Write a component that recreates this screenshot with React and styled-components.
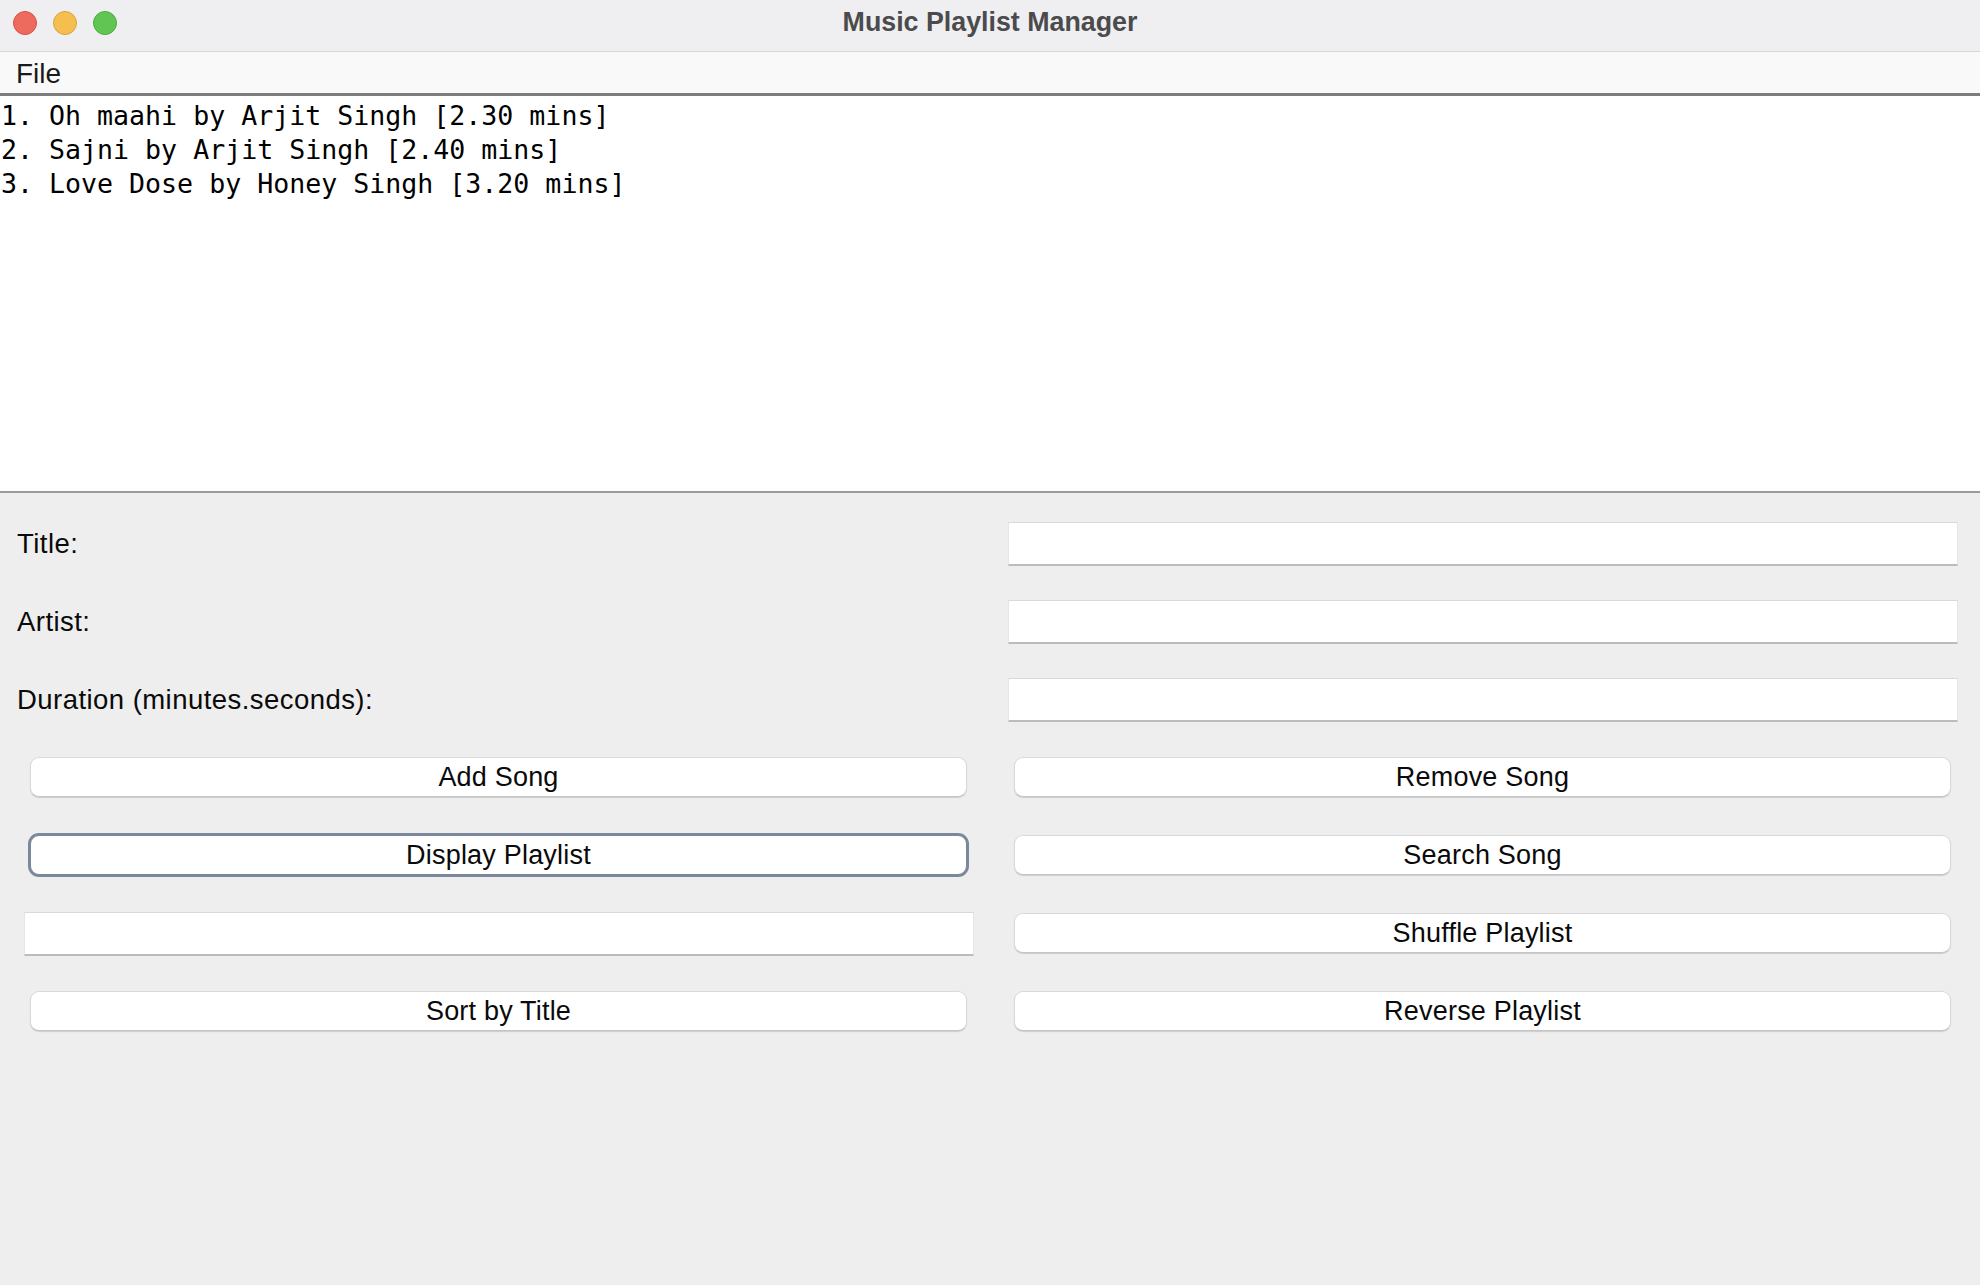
import React from 'react'
import styled, { createGlobalStyle } from 'styled-components'

const GlobalStyle = createGlobalStyle`
  html, body {
    margin: 0;
    padding: 0;
    background: #eeeeee;
  }
  * {
    box-sizing: border-box;
  }
`

const Window = styled.div`
  width: 1980px;
  height: 1285px;
  display: flex;
  flex-direction: column;
  background: #eeeeee;
  overflow: hidden;
  font-family: "Liberation Sans", Arial, sans-serif;
`

const TitleBar = styled.div`
  height: 52px;
  flex: none;
  display: grid;
  grid-template-columns: 1fr auto 1fr;
  align-items: center;
  background: #efeff1;
  border-bottom: 1px solid #d7d7d9;
`

const Lights = styled.div`
  display: flex;
  gap: 16px;
  padding-left: 13px;
  padding-bottom: 6px;
`

const Light = styled.span`
  width: 24px;
  height: 24px;
  border-radius: 50%;
  background: ${p => p.$color};
  border: 1px solid ${p => p.$edge};
`

const WindowTitle = styled.div`
  font-size: 26.8px;
  font-weight: 700;
  color: #4b4b4d;
  padding-bottom: 6px;
`

const MenuBar = styled.div`
  height: 44px;
  flex: none;
  display: flex;
  align-items: center;
  padding-left: 16px;
  background: #f9f9f9;
  border-bottom: 3px solid #7d7d7d;
`

const MenuItem = styled.span`
  font-size: 28px;
  color: #1a1a1a;
  padding-top: 2px;
`

const ListArea = styled.div`
  height: 397px;
  flex: none;
  background: #ffffff;
  padding: 3px 0 0 1px;
  border-bottom: 2px solid #9a9a9a;
  font-family: "DejaVu Sans Mono", "Liberation Mono", monospace;
  font-size: 26.6px;
  line-height: 34px;
  color: #000000;
  white-space: pre;
`

const Form = styled.div`
  display: grid;
  grid-template-columns: 1fr 1fr;
  grid-auto-rows: 44px;
  column-gap: 34px;
  row-gap: 34px;
  padding: 29px 22px 0 24px;
`

const Label = styled.div`
  display: flex;
  align-items: center;
  margin-left: -7px;
  font-size: 27.5px;
  letter-spacing: 0.45px;
  color: #0a0a0a;
`

const Field = styled.div`
  background: #ffffff;
  border-top: 1px solid #d9d9d9;
  border-left: 1px solid #e6e6e6;
  border-right: 1px solid #e6e6e6;
  border-bottom: 2px solid #bcbcbc;
`

const Button = styled.button`
  align-self: start;
  height: 40px;
  margin: 1px 7px 0 6px;
  padding: 0;
  background: #ffffff;
  border: 1px solid ${p => (p.$focused ? '#7b879b' : '#d9d9d9')};
  border-bottom-color: ${p => (p.$focused ? '#7b879b' : '#c4c4c4')};
  border-radius: 9px;
  box-shadow: ${p => (p.$focused ? '0 0 0 2px #7b879b' : '0 1px 1px rgba(0, 0, 0, 0.14)')};
  font-family: "Liberation Sans", Arial, sans-serif;
  font-size: 27px;
  letter-spacing: 0.2px;
  color: #0a0a0a;
  cursor: default;
`

const songs = [
  '1. Oh maahi by Arjit Singh [2.30 mins]',
  '2. Sajni by Arjit Singh [2.40 mins]',
  '3. Love Dose by Honey Singh [3.20 mins]',
]

const App = () => (
  <>
    <GlobalStyle />
    <Window>
      <TitleBar>
        <Lights>
          <Light $color="#ed6a5e" $edge="#d45448" />
          <Light $color="#f5bf4f" $edge="#d9a33c" />
          <Light $color="#61c554" $edge="#4ea943" />
        </Lights>
        <WindowTitle>Music Playlist Manager</WindowTitle>
        <div />
      </TitleBar>
      <MenuBar>
        <MenuItem>File</MenuItem>
      </MenuBar>
      <ListArea>
        {songs.map(s => (
          <div key={s}>{s}</div>
        ))}
      </ListArea>
      <Form>
        <Label>Title:</Label>
        <Field />
        <Label>Artist:</Label>
        <Field />
        <Label>Duration (minutes.seconds):</Label>
        <Field />
        <Button>Add Song</Button>
        <Button>Remove Song</Button>
        <Button $focused>Display Playlist</Button>
        <Button>Search Song</Button>
        <Field />
        <Button>Shuffle Playlist</Button>
        <Button>Sort by Title</Button>
        <Button>Reverse Playlist</Button>
      </Form>
    </Window>
  </>
)

export default App
